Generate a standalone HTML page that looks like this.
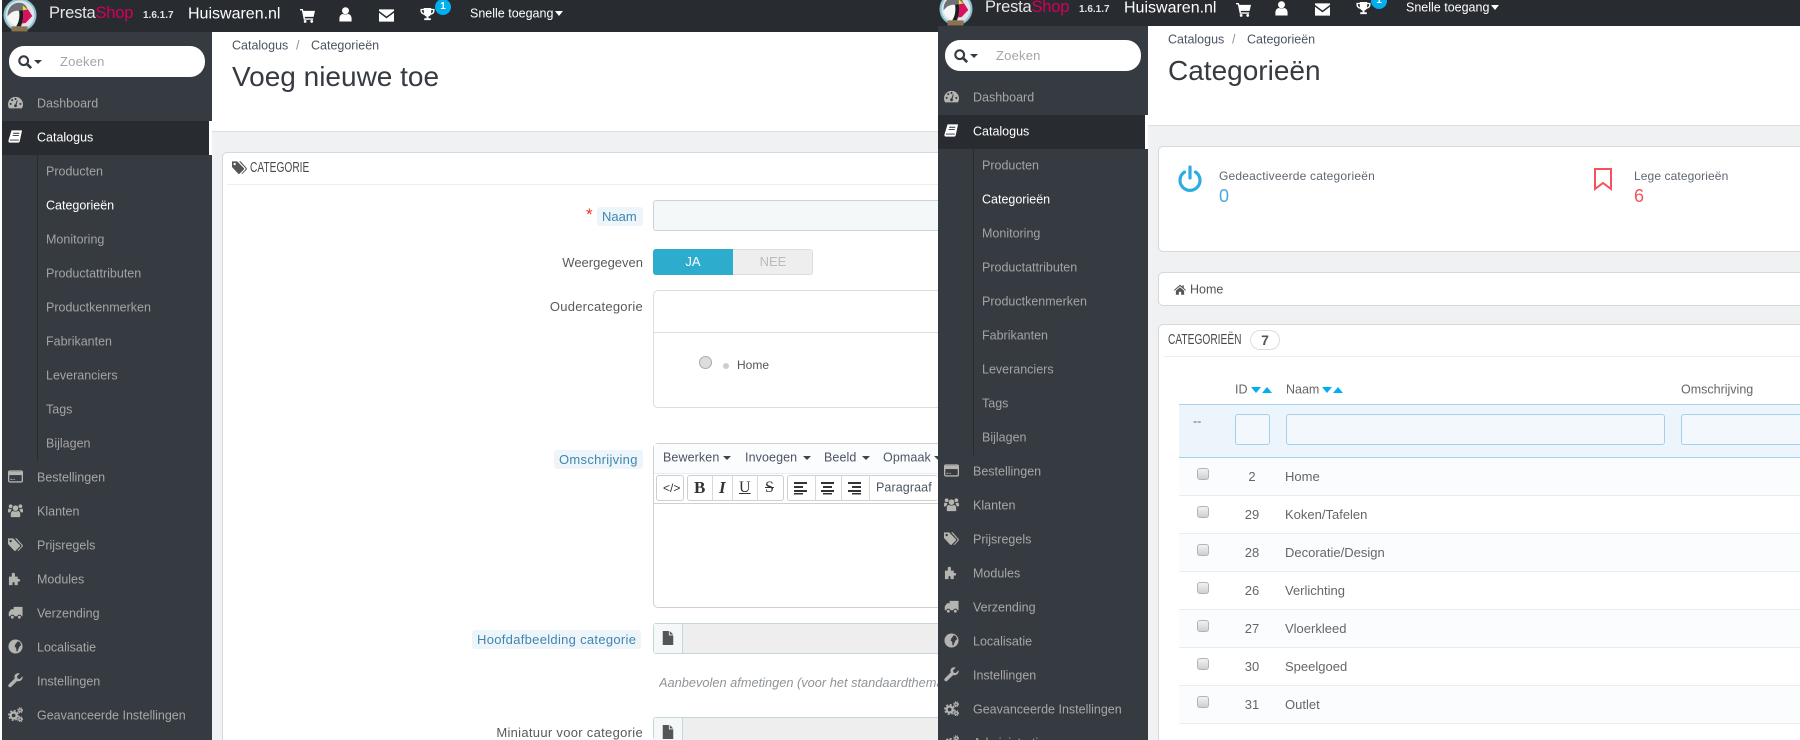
<!DOCTYPE html>
<html><head><meta charset="utf-8"><title>PrestaShop</title>
<style>
html,body{margin:0;padding:0;width:1800px;height:740px;overflow:hidden;background:#fff}
body{position:relative;font-family:"Liberation Sans",sans-serif;font-size:12.5px;color:#666}
.p{position:absolute;top:0;height:746px;overflow:hidden}
#L{left:0;width:938px;height:740px;top:0}
#R{left:936px;width:864px;top:-6px;clip-path:inset(0 0 0 2px)}
.a{position:absolute}
.t{position:absolute;white-space:nowrap;transform:translateY(-50%);line-height:1.2}
.top{position:absolute;left:2px;right:0;top:0;height:32px;background:#282b30}
.side{position:absolute;left:2px;top:32px;width:210px;bottom:0;background:#363a41}
.search{position:absolute;left:9px;top:46px;width:196px;height:31px;background:#fff;border-radius:15px}
.act{position:absolute;left:2px;top:121px;width:207px;height:34px;background:#282b30}
.gap{position:absolute;left:209px;top:121px;width:3px;height:34px;background:#fff}
.vl{position:absolute;left:37px;top:155px;width:1px;height:306px;background:#282b30}
.m{color:#a7a8a6}
.s{color:#a3a4a4}
.ic{position:absolute;left:8px;width:15px;height:15px;color:#b4b4b0}
.tb{position:absolute;width:15px;height:15px;color:#fff}
.head{position:absolute;left:212px;right:0;background:#fff;top:32px;height:99px;border-bottom:1px solid #dcdfe0}
.bg{position:absolute;left:212px;right:0;top:132px;bottom:0;background:#eff1f2}
.panel{position:absolute;background:#fff;border:1px solid #d3d8db;border-right:none;border-radius:5px 0 0 5px;box-sizing:border-box}
.h{font-size:15px;color:#4a4a4a;transform:translateY(-50%) scaleX(.68);transform-origin:0 50%}
.lb{color:#5a5a5a;text-align:right;font-size:13px}
.pill{position:absolute;background:#edf5fb;border-radius:3px;color:#3f86ad;line-height:19px;height:19px;padding:0 5px;white-space:nowrap;font-size:13px;box-sizing:content-box}
.in{position:absolute;box-sizing:border-box;background:#f5f8f9;border:1px solid #c7d6db;border-right:none;border-radius:3px 0 0 3px}
.mn{font-size:12.5px;color:#4b5563;letter-spacing:.1px}
.btn{position:absolute;top:475px;height:26px;box-sizing:border-box;border:1px solid #cfcfcf;border-radius:3px;background:#fff}
.dv{position:absolute;top:475px;height:26px;width:1px;background:#d8d8d8}
.car{position:absolute;width:0;height:0;border-left:4px solid transparent;border-right:4px solid transparent;border-top:4px solid #444}
.row{position:absolute;left:243px;width:621px;height:37px;border-bottom:1px solid #eaedef;background:#fff}
.row.o{background:#fbfcfe}
.cb{position:absolute;left:261px;width:12px;height:12px;box-sizing:border-box;border:1px solid #b4b4b4;border-radius:3px;background:linear-gradient(#f2f2f2,#cfcfcf)}
.up{position:absolute;width:0;height:0;border-left:5px solid transparent;border-right:5px solid transparent}
.fl{position:absolute;box-sizing:border-box;background:#f2f8fc;border:1px solid #a5d0e8;border-radius:3px;height:31px;top:420px}
.n{color:#666;font-size:13px}
.c{transform:translate(-50%,-50%)}
</style></head><body>
<svg width="0" height="0" style="position:absolute">
<symbol id="cart" viewBox="0 0 16 16"><path fill="currentColor" d="M0 1h3l.6 2H16l-1.500 6.500H5l.3 1.500H14v1.500H4L2 2.500H0z"/><circle fill="currentColor" cx="5.500" cy="14.300" r="1.500"/><circle fill="currentColor" cx="12.500" cy="14.300" r="1.500"/></symbol>
<symbol id="user" viewBox="0 0 16 16"><circle fill="currentColor" cx="8" cy="4" r="3.700"/><path fill="currentColor" d="M1.500 15.500v-3c0-3 1.800-5 4-5 .8.700 4.200.700 5 0 2.200 0 4 2 4 5v3z"/></symbol>
<symbol id="env" viewBox="0 0 16 16"><path fill="currentColor" d="M0 1.500h16v1.500L8 9 0 3zM0 5l8 6 8-6v9.500H0z"/></symbol>
<symbol id="tro" viewBox="0 0 16 16"><path fill="currentColor" fill-rule="evenodd" d="M4 1h8v1h3.500v2c0 2.500-2 4-4 4.300C10.800 9.500 9.800 10 9 10.300V12h2.500v2h-7v-2H7v-1.700C6.200 10 5.200 9.500 4.500 8.300 2.500 8 .5 6.500.5 4V2H4zM2 3.300V4c0 1.300 1 2.300 2.200 2.800L4 3.300zM14 3.300h-2l-.2 3.500C13 6.300 14 5.300 14 4z"/></symbol>
<symbol id="search" viewBox="0 0 16 16"><circle cx="6.500" cy="6.500" r="5" fill="none" stroke="#363a41" stroke-width="2.400"/><path d="M10.500 10.500L15 15" stroke="#363a41" stroke-width="3"/></symbol>
<symbol id="dash" viewBox="0 0 16 16"><path fill="currentColor" d="M8 2a8 8 0 0 0-8 8c0 1.700.5 3 1.200 4.200h13.600c.7-1.200 1.200-2.500 1.200-4.200a8 8 0 0 0-8-8z"/><g fill="#363a41"><circle cx="2.800" cy="9.500" r="1.100"/><circle cx="4.500" cy="5.500" r="1.100"/><circle cx="8" cy="4.200" r="1.100"/><circle cx="13.200" cy="9.500" r="1.100"/><circle cx="8" cy="11.500" r="1.500"/><path d="M7.400 11L9.500 5.500l.8.3L8.800 11.500z"/></g></symbol>
<symbol id="book" viewBox="0 0 16 16"><path fill="#fff" d="M3.800 1.500h11.200l-2.500 11.500c-.2.800-.8 1.500-1.700 1.500H2c-1.200 0-1.800-1-1.500-2.300z"/><path stroke="#282b30" stroke-width="1" d="M5.500 4.500h6.500M5 7h6.500M2 11.800h9.500"/></symbol>
<symbol id="card" viewBox="0 0 16 16"><rect x=".7" y="2.200" width="14.600" height="11.600" rx="1.300" fill="none" stroke="currentColor" stroke-width="1.400"/><rect x="1" y="3" width="14" height="3.500" fill="currentColor"/><path stroke="currentColor" stroke-width="1" d="M2.500 11h2.500M6 11h1.500"/></symbol>
<symbol id="users" viewBox="0 0 16 16"><g fill="currentColor"><circle cx="8" cy="5.500" r="3"/><circle cx="2.800" cy="3.500" r="2"/><circle cx="13.200" cy="3.500" r="2"/><path d="M3 15v-3.500C3 9.500 4.200 8.500 5.500 8.500c1 .7 4 .7 5 0 1.300 0 2.500 1 2.500 3V15zM0 10V7.500C0 6.300.8 6 1.500 6c.8.500 1.500.7 2.200.5C4 7.300 3 8.300 2.200 10zM16 10V7.500C16 6.300 15.200 6 14.500 6c-.8.500-1.500.7-2.200.5-.3.800.7 1.800 1.500 3.500z"/></g></symbol>
<symbol id="tags" viewBox="0 0 16 16"><path fill="currentColor" fill-rule="evenodd" d="M0 1.500h5.500l7 7c.5.500.5 1.200 0 1.700l-4.300 4.300c-.5.500-1.200.5-1.700 0L0 7.500zM2.800 3a1.300 1.300 0 1 0 .01 0z"/><path fill="currentColor" d="M7.500 1.500h1.800l6.200 7c.5.500.5 1.200 0 1.700l-4 4.300c-.4.400-1 .5-1.400.2l4-4.500c.5-.5.500-1.200 0-1.700z"/></symbol>
<symbol id="puz" viewBox="0 0 16 16"><path fill="currentColor" d="M1 6h3V3.500a1.700 1.700 0 0 1 3.400 0V6h3v2.500h1.600a1.500 1.500 0 0 1 0 2.800h-1.600V15H7v-2.500a1.300 1.300 0 0 0-2.200 0V15H1z"/></symbol>
<symbol id="tr" viewBox="0 0 16 16"><path fill="currentColor" d="M6 2h9.500v10h-1.200a2.200 2.200 0 0 0-4.300 0H6.800a2.200 2.200 0 0 0-4.300 0H.8V8l2.400-3.500H6z"/><circle fill="currentColor" cx="4.600" cy="13" r="1.500"/><circle fill="currentColor" cx="12.100" cy="13" r="1.500"/></symbol>
<symbol id="glo" viewBox="0 0 16 16"><circle cx="8" cy="8" r="7.500" fill="currentColor"/><path fill="#363a41" d="M10.500 2.200l2.500 1.500 1 3-1.500 1-1.500 3-1 2.800-1-.5-.3-3.500L7 8l1-2.500z"/></symbol>
<symbol id="wr" viewBox="0 0 16 16"><path fill="currentColor" d="M15.500 3.500l-3 3-2.300-.6-.6-2.300 3-3C10.500-.3 8.200.5 7.300 2.200c-.6 1.200-.5 2.500-.1 3.500L1 12c-.9.900-.9 1.900-.2 2.700s1.900.8 2.700 0L9.800 8.500c1.200.4 2.300.4 3.400-.2 1.900-.9 2.800-3 2.300-4.800z"/></symbol>
<symbol id="cog" viewBox="0 0 16 16"><g fill="none" stroke="currentColor"><circle cx="6" cy="9" r="3.200" stroke-width="2.400"/><circle cx="6" cy="9" r="5" stroke-width="1.800" stroke-dasharray="2 1.930"/><circle cx="13" cy="3.500" r="1.500" stroke-width="1.400"/><circle cx="13" cy="3.500" r="2.700" stroke-width="1" stroke-dasharray="1.200 1"/><circle cx="13" cy="13" r="1.500" stroke-width="1.400"/><circle cx="13" cy="13" r="2.700" stroke-width="1" stroke-dasharray="1.200 1"/></g></symbol>
<symbol id="logo" viewBox="0 0 36 36"><circle cx="18" cy="18" r="17.500" fill="#8cc3d4"/><circle cx="18" cy="18" r="15.300" fill="#dfe5e6"/><path fill="#6d7174" d="M5 20c-1-9 5-15 12-15 5 0 8 3 9 7l-5 1c-2 1-3 1-5 .5C11 13 7 16 5 20z"/><path fill="#f5f6f6" d="M4.500 20c2-3 6-6 11-6.500 2 .5 2 3 2 6 0 4-2 8-4 10-4-1.500-8-5-9-9.500z"/><path fill="#1d1d1f" d="M17 13.500l4-.5c1.500 5 0 12-2 17h-5c3-4 4-11 3-16.500z"/><path fill="#e8e337" d="M21 8l5 4.500-5 1.500z"/><path fill="#d6115f" d="M21 13l5.500-1 4.500 7-7 7.500-4 .5c1.500-5 2-10 1-14z"/><path fill="#8a7350" d="M9 30h17v5.500H9z"/></symbol>
<symbol id="home" viewBox="0 0 16 16"><path fill="currentColor" d="M8 1.500l3 2.700V2.500h2v3.500l3 2.700-.8 1L8 3.500.8 9.700l-.8-1zM2.500 9.700L8 5l5.500 4.700V15H9.500v-4h-3v4h-4z"/></symbol>
<symbol id="file" viewBox="0 0 16 16"><path fill="#555" d="M2 0h7v5h5v11H2zM10 0l4 4h-4z"/></symbol>
</svg>

<!-- LEFT -->
<div id="L" class="p">
<div class="top"></div>
<svg class="a" style="left:3px;top:-2px" width="34" height="34"><use href="#logo"/></svg>
<div class="t" style="left:49px;top:14px;font-size:16.500px;color:#e6e6e6;font-weight:bold;letter-spacing:-.2px;font-weight:normal">Presta<span style="color:#d6005b">Shop</span></div>
<div class="t" style="left:143px;top:16px;font-size:10px;font-weight:bold;color:#dfe3e6">1.6.1.7</div>
<div class="t" style="left:188px;top:14px;font-size:16px;color:#fff">Huiswaren.nl</div>
<svg class="tb" style="left:300px;top:8px"><use href="#cart"/></svg>
<svg class="tb" style="left:338px;top:7px"><use href="#user"/></svg>
<svg class="tb" style="left:379px;top:8px"><use href="#env"/></svg>
<svg class="tb" style="left:420px;top:7px"><use href="#tro"/></svg>
<div class="a" style="left:435px;top:-1px;width:16px;height:16px;border-radius:8px;background:#00aff0;color:#fff;font-size:10px;font-weight:bold;line-height:15px;text-align:center">1</div>
<div class="t" style="left:470px;top:14px;color:#fff;font-size:12.500px">Snelle toegang</div>
<div class="car" style="left:555px;top:11px;border-top-color:#fff;border-left-width:4.500px;border-right-width:4.500px;border-top-width:5px"></div>

<div class="side"></div>
<div class="search"></div>
<svg class="a" style="left:18px;top:55px" width="14" height="14"><use href="#search"/></svg>
<div class="car" style="left:34px;top:60px;border-top-color:#363a41"></div>
<div class="t" style="left:60px;top:62px;color:#a5a5a5;font-size:13px;letter-spacing:.2px">Zoeken</div>
<div class="act"></div><div class="gap"></div><div class="vl"></div>

<svg class="ic" style="top:95px"><use href="#dash"/></svg><div class="t m" style="left:37px;top:104px">Dashboard</div>
<svg class="ic" style="top:129px"><use href="#book"/></svg><div class="t" style="left:37px;top:138px;color:#fff">Catalogus</div>
<div class="t s" style="left:46px;top:172px">Producten</div>
<div class="t" style="left:46px;top:206px;color:#fff">Categorieën</div>
<div class="t s" style="left:46px;top:240px">Monitoring</div>
<div class="t s" style="left:46px;top:274px">Productattributen</div>
<div class="t s" style="left:46px;top:308px">Productkenmerken</div>
<div class="t s" style="left:46px;top:342px">Fabrikanten</div>
<div class="t s" style="left:46px;top:376px">Leveranciers</div>
<div class="t s" style="left:46px;top:410px">Tags</div>
<div class="t s" style="left:46px;top:444px">Bijlagen</div>
<svg class="ic" style="top:469px"><use href="#card"/></svg><div class="t m" style="left:37px;top:478px">Bestellingen</div>
<svg class="ic" style="top:503px"><use href="#users"/></svg><div class="t m" style="left:37px;top:512px">Klanten</div>
<svg class="ic" style="top:537px"><use href="#tags"/></svg><div class="t m" style="left:37px;top:546px">Prijsregels</div>
<svg class="ic" style="top:571px"><use href="#puz"/></svg><div class="t m" style="left:37px;top:580px">Modules</div>
<svg class="ic" style="top:605px"><use href="#tr"/></svg><div class="t m" style="left:37px;top:614px">Verzending</div>
<svg class="ic" style="top:639px"><use href="#glo"/></svg><div class="t m" style="left:37px;top:648px">Localisatie</div>
<svg class="ic" style="top:673px"><use href="#wr"/></svg><div class="t m" style="left:37px;top:682px">Instellingen</div>
<svg class="ic" style="top:707px"><use href="#cog"/></svg><div class="t m" style="left:37px;top:716px">Geavanceerde Instellingen</div>

<div class="bg"></div><div class="head"></div>
<div class="t" style="left:232px;top:46px;font-size:12.500px;color:#4b5563">Catalogus</div>
<div class="t" style="left:296px;top:46px;color:#8a9299;font-size:12.500px">/</div>
<div class="t" style="left:311px;top:46px;font-size:12.500px;color:#4b5563">Categorieën</div>
<div class="t" style="left:232px;top:77px;font-size:28px;color:#363a41">Voeg nieuwe toe</div>

<div class="panel" style="left:222px;top:152px;width:716px;height:588px;border-bottom:none;border-radius:5px 0 0 0"></div>
<svg class="a" style="left:232px;top:160px;color:#555" width="15" height="15"><use href="#tags"/></svg>
<div class="t h" style="left:250px;top:168px">CATEGORIE</div>
<div class="a" style="left:227px;top:184px;width:711px;height:1px;background:#eee"></div>

<div class="t" style="left:586px;top:215px;color:#e32;font-size:17px">*</div>
<div class="pill" style="left:597px;top:207px;width:36px">Naam</div>
<div class="in" style="left:653px;top:200px;width:285px;height:31px"></div>

<div class="t lb" style="right:295px;top:263px">Weergegeven</div>
<div class="a" style="left:653px;top:249px;width:160px;height:26px;background:#eee;border-radius:3px;box-shadow:inset 0 0 0 1px #ddd"></div>
<div class="a" style="left:653px;top:249px;width:80px;height:26px;background:#2eacce;border-radius:3px 0 0 3px;color:#fff;text-align:center;line-height:25px;font-size:13px">JA</div>
<div class="a" style="left:733px;top:249px;width:80px;height:26px;color:#bbb;text-align:center;line-height:25px;font-size:13px">NEE</div>

<div class="t lb" style="right:295px;top:307px;letter-spacing:.25px">Oudercategorie</div>
<div class="panel" style="left:653px;top:290px;width:285px;height:118px;border-color:#ddd"></div>
<div class="a" style="left:653px;top:332px;width:285px;height:1px;background:#ddd"></div>
<div class="a" style="left:699px;top:356px;width:13px;height:13px;box-sizing:border-box;border-radius:50%;border:1px solid #aaa;background:#ddd"></div>
<div class="a" style="left:723px;top:363px;width:6px;height:6px;border-radius:50%;background:#ccc"></div>
<div class="t" style="left:737px;top:365px;font-size:12px;color:#555">Home</div>

<div class="pill" style="left:554px;top:450px;letter-spacing:.3px">Omschrijving</div>
<div class="panel" style="left:653px;top:443px;width:285px;height:165px;border-color:#d0d0d0"></div>
<div class="a" style="left:654px;top:444px;width:284px;height:29px;background:#fbfcfe;border-bottom:1px solid #ececec"></div>
<div class="t mn" style="left:663px;top:458px">Bewerken</div><div class="car" style="left:723px;top:456px"></div>
<div class="t mn" style="left:745px;top:458px">Invoegen</div><div class="car" style="left:803px;top:456px"></div>
<div class="t mn" style="left:824px;top:458px">Beeld</div><div class="car" style="left:862px;top:456px"></div>
<div class="t mn" style="left:883px;top:458px">Opmaak</div><div class="car" style="left:934px;top:456px;border-right:none"></div>
<div class="btn" style="left:656px;width:28px"></div>
<div class="t" style="left:663px;top:488px;font-size:12px;color:#333">&lt;/&gt;</div>
<div class="btn" style="left:687px;width:97px"></div>
<div class="dv" style="left:712px"></div><div class="dv" style="left:732px"></div><div class="dv" style="left:757px"></div>
<div class="t" style="left:694px;top:488px;font:bold 17px 'Liberation Serif',serif;color:#333">B</div>
<div class="t" style="left:719px;top:488px;font:italic bold 17px 'Liberation Serif',serif;color:#333">I</div>
<div class="t" style="left:739px;top:488px;font:16px 'Liberation Serif',serif;color:#333;text-decoration:underline">U</div>
<div class="t" style="left:765px;top:488px;font:16px 'Liberation Serif',serif;color:#333;text-decoration:line-through">S</div>
<div class="btn" style="left:787px;width:151px;border-right:none"></div>
<div class="dv" style="left:815px"></div><div class="dv" style="left:841px"></div><div class="dv" style="left:869px"></div>
<svg class="a" style="left:794px;top:481px" width="68" height="14"><g fill="#333"><rect x="0" y="1" width="13" height="2"/><rect x="0" y="5" width="9" height="2"/><rect x="0" y="9" width="13" height="2"/><rect x="0" y="12" width="9" height="1.500"/><rect x="27" y="1" width="13" height="2"/><rect x="29" y="5" width="9" height="2"/><rect x="27" y="9" width="13" height="2"/><rect x="29" y="12" width="9" height="1.500"/><rect x="54" y="1" width="13" height="2"/><rect x="58" y="5" width="9" height="2"/><rect x="54" y="9" width="13" height="2"/><rect x="58" y="12" width="9" height="1.500"/></g></svg>
<div class="t mn" style="left:876px;top:488px">Paragraaf</div>
<div class="a" style="left:654px;top:503px;width:284px;height:1px;background:#d0d0d0"></div>

<div class="pill" style="left:472px;top:630px;letter-spacing:.3px">Hoofdafbeelding categorie</div>
<div class="in" style="left:653px;top:623px;width:285px;height:31px;background:#eee"></div>
<div class="a" style="left:654px;top:624px;width:28px;height:29px;background:#f5f8f9;border-right:1px solid #c7d6db"></div>
<svg class="a" style="left:661px;top:631px" width="14" height="14"><use href="#file"/></svg>
<div class="a" style="left:659px;top:674px;width:279px;height:18px;overflow:hidden;font-style:italic;color:#8f9498;white-space:nowrap;line-height:18px;font-size:12.800px">Aanbevolen afmetingen (voor het standaardthema) zijn</div>

<div class="t lb" style="right:295px;top:733px;letter-spacing:.3px">Miniatuur voor categorie</div>
<div class="in" style="left:653px;top:717px;width:285px;height:23px;background:#eee;border-bottom:none"></div>
<div class="a" style="left:654px;top:718px;width:28px;height:22px;background:#f5f8f9;border-right:1px solid #c7d6db"></div>
<svg class="a" style="left:661px;top:725px" width="14" height="14"><use href="#file"/></svg>
</div>

<!-- RIGHT -->
<div id="R" class="p">
<div class="top"></div>
<svg class="a" style="left:3px;top:-2px" width="34" height="34"><use href="#logo"/></svg>
<div class="t" style="left:49px;top:14px;font-size:16.500px;color:#e6e6e6;letter-spacing:-.2px">Presta<span style="color:#d6005b">Shop</span></div>
<div class="t" style="left:143px;top:16px;font-size:10px;font-weight:bold;color:#dfe3e6">1.6.1.7</div>
<div class="t" style="left:188px;top:14px;font-size:16px;color:#fff">Huiswaren.nl</div>
<svg class="tb" style="left:300px;top:8px"><use href="#cart"/></svg>
<svg class="tb" style="left:338px;top:7px"><use href="#user"/></svg>
<svg class="tb" style="left:379px;top:8px"><use href="#env"/></svg>
<svg class="tb" style="left:420px;top:7px"><use href="#tro"/></svg>
<div class="a" style="left:435px;top:-1px;width:16px;height:16px;border-radius:8px;background:#00aff0;color:#fff;font-size:10px;font-weight:bold;line-height:15px;text-align:center">1</div>
<div class="t" style="left:470px;top:14px;color:#fff;font-size:12.500px">Snelle toegang</div>
<div class="car" style="left:555px;top:11px;border-top-color:#fff;border-left-width:4.500px;border-right-width:4.500px;border-top-width:5px"></div>

<div class="side"></div>
<div class="search"></div>
<svg class="a" style="left:18px;top:55px" width="14" height="14"><use href="#search"/></svg>
<div class="car" style="left:34px;top:60px;border-top-color:#363a41"></div>
<div class="t" style="left:60px;top:62px;color:#a5a5a5;font-size:13px;letter-spacing:.2px">Zoeken</div>
<div class="act"></div><div class="gap"></div><div class="vl"></div>

<svg class="ic" style="top:95px"><use href="#dash"/></svg><div class="t m" style="left:37px;top:104px">Dashboard</div>
<svg class="ic" style="top:129px"><use href="#book"/></svg><div class="t" style="left:37px;top:138px;color:#fff">Catalogus</div>
<div class="t s" style="left:46px;top:172px">Producten</div>
<div class="t" style="left:46px;top:206px;color:#fff">Categorieën</div>
<div class="t s" style="left:46px;top:240px">Monitoring</div>
<div class="t s" style="left:46px;top:274px">Productattributen</div>
<div class="t s" style="left:46px;top:308px">Productkenmerken</div>
<div class="t s" style="left:46px;top:342px">Fabrikanten</div>
<div class="t s" style="left:46px;top:376px">Leveranciers</div>
<div class="t s" style="left:46px;top:410px">Tags</div>
<div class="t s" style="left:46px;top:444px">Bijlagen</div>
<svg class="ic" style="top:469px"><use href="#card"/></svg><div class="t m" style="left:37px;top:478px">Bestellingen</div>
<svg class="ic" style="top:503px"><use href="#users"/></svg><div class="t m" style="left:37px;top:512px">Klanten</div>
<svg class="ic" style="top:537px"><use href="#tags"/></svg><div class="t m" style="left:37px;top:546px">Prijsregels</div>
<svg class="ic" style="top:571px"><use href="#puz"/></svg><div class="t m" style="left:37px;top:580px">Modules</div>
<svg class="ic" style="top:605px"><use href="#tr"/></svg><div class="t m" style="left:37px;top:614px">Verzending</div>
<svg class="ic" style="top:639px"><use href="#glo"/></svg><div class="t m" style="left:37px;top:648px">Localisatie</div>
<svg class="ic" style="top:673px"><use href="#wr"/></svg><div class="t m" style="left:37px;top:682px">Instellingen</div>
<svg class="ic" style="top:707px"><use href="#cog"/></svg><div class="t m" style="left:37px;top:716px">Geavanceerde Instellingen</div>
<div class="a" style="left:2px;top:741px;width:210px;height:5px;overflow:hidden"><svg class="ic" style="top:0;left:6px"><use href="#cog"/></svg><div class="a m" style="left:35px;top:1px;white-space:nowrap;line-height:15px">Administratie</div></div>

<div class="bg"></div><div class="head"></div>
<div class="t" style="left:232px;top:46px;font-size:12.500px;color:#4b5563">Catalogus</div>
<div class="t" style="left:296px;top:46px;color:#8a9299;font-size:12.500px">/</div>
<div class="t" style="left:311px;top:46px;font-size:12.500px;color:#4b5563">Categorieën</div>
<div class="t" style="left:232px;top:77px;font-size:28px;color:#363a41">Categorieën</div>

<div class="panel" style="left:222px;top:152px;width:642px;height:106px"></div>
<svg class="a" style="left:241px;top:171px" width="26" height="27"><g fill="none" stroke="#2eacdf" stroke-width="3.200" stroke-linecap="round"><path d="M7.500 7a10 10 0 1 0 11 0"/><path d="M13 2v11"/></g></svg>
<div class="t" style="left:283px;top:182px;font-size:12px;color:#5f6770;letter-spacing:.2px">Gedeactiveerde categorieën</div>
<div class="t" style="left:283px;top:203px;font-size:18px;color:#4ca7e0">0</div>
<svg class="a" style="left:657px;top:173px" width="20" height="24"><path d="M2 2h16v20l-8-6-8 6z" fill="none" stroke="#f5515f" stroke-width="2"/></svg>
<div class="t" style="left:698px;top:182px;font-size:12px;color:#5f6770;letter-spacing:.1px">Lege categorieën</div>
<div class="t" style="left:698px;top:203px;font-size:18px;color:#f5515f">6</div>

<div class="panel" style="left:222px;top:278px;width:642px;height:34px"></div>
<svg class="a" style="left:238px;top:289px;color:#555" width="12" height="13"><use href="#home"/></svg>
<div class="t" style="left:254px;top:296px;color:#555;font-size:12.500px">Home</div>

<div class="panel" style="left:222px;top:330px;width:642px;height:416px;border-bottom:none;border-radius:5px 0 0 0"></div>
<div class="t h" style="left:232px;top:346px">CATEGORIEËN</div>
<div class="a" style="left:314px;top:336px;width:30px;height:20px;box-sizing:border-box;border:1px solid #ddd;border-radius:10px;background:#fff;text-align:center;font-weight:bold;line-height:18px;color:#555;font-size:14px">7</div>
<div class="a" style="left:228px;top:362px;width:636px;height:1px;background:#eee"></div>

<div class="t" style="left:299px;top:396px;color:#666;font-size:12.500px">ID</div>
<div class="up" style="left:315px;top:393px;border-top:6px solid #00aff0"></div>
<div class="up" style="left:326px;top:393px;border-bottom:6px solid #00aff0"></div>
<div class="t" style="left:350px;top:396px;color:#666;font-size:12.500px">Naam</div>
<div class="up" style="left:386px;top:393px;border-top:6px solid #00aff0"></div>
<div class="up" style="left:397px;top:393px;border-bottom:6px solid #00aff0"></div>
<div class="t" style="left:745px;top:396px;color:#666;font-size:12.500px">Omschrijving</div>

<div class="a" style="left:243px;top:410px;width:621px;height:54px;box-sizing:border-box;background:#ebf5fb;border-top:1px solid #a5d3eb;border-bottom:1px solid #a5d3eb"></div>
<div class="t" style="left:257px;top:428px;color:#666">--</div>
<div class="fl" style="left:299px;width:35px"></div>
<div class="fl" style="left:350px;width:379px"></div>
<div class="fl" style="left:745px;width:119px;border-right:none;border-radius:3px 0 0 3px"></div>

<div class="row o" style="top:464px"></div>
<div class="row" style="top:502px"></div>
<div class="row o" style="top:540px"></div>
<div class="row" style="top:578px"></div>
<div class="row o" style="top:616px"></div>
<div class="row" style="top:654px"></div>
<div class="row o" style="top:692px"></div>

<div class="cb" style="top:474px"></div><div class="t n c" style="left:316px;top:483px">2</div><div class="t n" style="left:349px;top:483px">Home</div>
<div class="cb" style="top:512px"></div><div class="t n c" style="left:316px;top:521px">29</div><div class="t n" style="left:349px;top:521px">Koken/Tafelen</div>
<div class="cb" style="top:550px"></div><div class="t n c" style="left:316px;top:559px">28</div><div class="t n" style="left:349px;top:559px">Decoratie/Design</div>
<div class="cb" style="top:588px"></div><div class="t n c" style="left:316px;top:597px">26</div><div class="t n" style="left:349px;top:597px">Verlichting</div>
<div class="cb" style="top:626px"></div><div class="t n c" style="left:316px;top:635px">27</div><div class="t n" style="left:349px;top:635px">Vloerkleed</div>
<div class="cb" style="top:664px"></div><div class="t n c" style="left:316px;top:673px">30</div><div class="t n" style="left:349px;top:673px">Speelgoed</div>
<div class="cb" style="top:702px"></div><div class="t n c" style="left:316px;top:711px">31</div><div class="t n" style="left:349px;top:711px">Outlet</div>
</div>
</body></html>
